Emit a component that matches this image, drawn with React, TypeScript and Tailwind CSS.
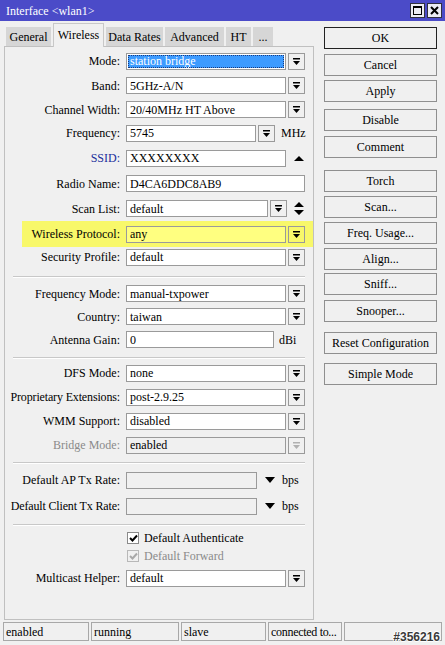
import React from 'react';

const font = "font-['Liberation_Serif',serif]";

function DropIcon({ disabled = false }: { disabled?: boolean }) {
  const c = disabled ? '#b0b0b0' : '#000';
  return (
    <svg width="9" height="9" viewBox="0 0 9 9">
      <rect x="1" y="1" width="7" height="1.5" fill={c} />
      <path d="M1 4 L8 4 L4.5 8 Z" fill={c} />
    </svg>
  );
}

function DropBtn({ disabled = false }: { disabled?: boolean }) {
  return (
    <div className="w-[17px] h-[17px] border border-[#9a9a9a] bg-[#f0f0f0] flex items-center justify-center shrink-0">
      <DropIcon disabled={disabled} />
    </div>
  );
}

function Field({
  value,
  w,
  cls = 'bg-white',
  textCls = 'text-black',
}: {
  value: string;
  w: string;
  cls?: string;
  textCls?: string;
}) {
  return (
    <div className={`${w} ${cls} h-[17px] border border-[#9a9a9a] flex items-center px-[3px] shrink-0`}>
      <span className={`${textCls} leading-none`}>{value}</span>
    </div>
  );
}

function Row({
  label,
  h,
  children,
  labelCls = 'text-black',
  rowCls = '',
  labelW = 'w-[116px]',
}: {
  label: string;
  h: string;
  children?: React.ReactNode;
  labelCls?: string;
  rowCls?: string;
  labelW?: string;
}) {
  return (
    <div className={`flex items-center ${h} ${rowCls}`}>
      <div className={`${labelW} text-right pr-[1px] shrink-0 whitespace-nowrap ${labelCls}`}>{label}</div>
      <div className="flex items-center ml-[5px] gap-[2px]">{children}</div>
    </div>
  );
}

function Sep({ cls }: { cls: string }) {
  return <div className={`mx-[8px] border-t border-[#c8c8c8] border-b-white border-b h-[2px] ${cls}`} />;
}

function Btn({ label, cls = '', ok = false }: { label: string; cls?: string; ok?: boolean }) {
  return (
    <div
      className={`w-[113px] h-[22px] flex items-center justify-center bg-[#f0f0f0] border ${
        ok ? 'border-[#222]' : 'border-[#8f8f8f]'
      } ${cls}`}
    >
      {label}
    </div>
  );
}

function Tab({ label, active = false, w }: { label: string; active?: boolean; w: string }) {
  return active ? (
    <div className={`${w} h-[24px] bg-[#f0f0f0] border-t border-l border-r border-[#c8c8c8] flex items-start justify-center pt-[2px] -mb-[1px] relative z-10`}>
      {label}
    </div>
  ) : (
    <div className={`${w} h-[19px] bg-[#d6d6d6] flex items-center justify-center`}>{label}</div>
  );
}

export default function App() {
  return (
    <div className={`w-[445px] h-[645px] bg-[#f0f0f0] text-[12px] text-black flex flex-col overflow-hidden ${font}`}>
      {/* title bar */}
      <div className="h-[21px] bg-[#4b4bc8] flex items-center justify-between pl-[6px] pr-[3px] shrink-0">
        <span className="text-white">Interface &lt;wlan1&gt;</span>
        <div className="flex gap-[2px]">
          <div className="w-[15px] h-[15px] bg-[#ececf4] border border-[#303040] flex items-center justify-center">
            <div className="w-[9px] h-[9px] border border-black border-t-2" />
          </div>
          <div className="w-[15px] h-[15px] bg-[#ececf4] border border-[#303040] flex items-center justify-center">
            <svg width="9" height="9" viewBox="0 0 9 9">
              <path d="M1 1 L8 8 M8 1 L1 8" stroke="#000" strokeWidth="2" />
            </svg>
          </div>
        </div>
      </div>

      <div className="flex flex-1 min-h-0">
        {/* left side */}
        <div className="w-[310px] ml-[4px] flex flex-col">
          <div className="h-[25px] flex items-end gap-[2px] pl-[2px]">
            <Tab label="General" w="w-[45px]" />
            <Tab label="Wireless" active w="w-[51px]" />
            <Tab label="Data Rates" w="w-[57px]" />
            <Tab label="Advanced" w="w-[59px]" />
            <Tab label="HT" w="w-[25px]" />
            <Tab label="..." w="w-[20px]" />
          </div>
          <div className="h-[574px] border border-[#c0c0c0] bg-[#f0f0f0] flex flex-col pt-[2px]">
            <Row label="Mode:" h="h-[24px]">
              <div className="w-[160px] h-[17px] border border-[#9a9a9a] bg-white p-[1px] shrink-0">
                <div className="h-full bg-[#3d9bff] flex items-center px-[2px] outline-1 outline-dotted outline-[#1b3b7c] -outline-offset-1">
                  <span className="text-white leading-none">station bridge</span>
                </div>
              </div>
              <DropBtn />
            </Row>
            <Row label="Band:" h="h-[25px]">
              <Field value="5GHz-A/N" w="w-[160px]" />
              <DropBtn />
            </Row>
            <Row label="Channel Width:" h="h-[23px]">
              <Field value="20/40MHz HT Above" w="w-[160px]" />
              <DropBtn />
            </Row>
            <Row label="Frequency:" h="h-[24px]">
              <Field value="5745" w="w-[130px]" />
              <DropBtn />
              <span className="ml-[4px]">MHz</span>
            </Row>
            <Row label="SSID:" h="h-[26px]" labelCls="text-[#1c2f9c]">
              <Field value="XXXXXXXX" w="w-[160px]" />
              <svg width="12" height="9" viewBox="0 0 12 9" className="ml-[5px]">
                <path d="M1 7 L11 7 L6 2 Z" fill="#000" />
              </svg>
            </Row>
            <Row label="Radio Name:" h="h-[25px]">
              <Field value="D4CA6DDC8AB9" w="w-[179px]" />
            </Row>
            <Row label="Scan List:" h="h-[25px]">
              <Field value="default" w="w-[142px]" />
              <DropBtn />
              <svg width="12" height="15" viewBox="0 0 12 15" className="ml-[4px]">
                <path d="M1 6 L11 6 L6 1 Z M1 9 L11 9 L6 14 Z" fill="#000" />
              </svg>
            </Row>
            <Row
              label="Wireless Protocol:"
              h="h-[26px]"
              rowCls="bg-[#f8f86a] ml-[17px]"
              labelW="w-[99px]"
            >
              <Field value="any" w="w-[160px]" cls="bg-[#ffff80]" />
              <div className="w-[17px] h-[17px] border border-[#9a9a9a] bg-[#f8f86a] flex items-center justify-center shrink-0">
                <DropIcon />
              </div>
            </Row>
            <Row label="Security Profile:" h="h-[20px]">
              <Field value="default" w="w-[160px]" />
              <DropBtn />
            </Row>
            <Sep cls="mt-[9px] mb-[4px]" />
            <Row label="Frequency Mode:" h="h-[23px]">
              <Field value="manual-txpower" w="w-[160px]" />
              <DropBtn />
            </Row>
            <Row label="Country:" h="h-[23px]">
              <Field value="taiwan" w="w-[160px]" />
              <DropBtn />
            </Row>
            <Row label="Antenna Gain:" h="h-[23px]">
              <Field value="0" w="w-[148px]" />
              <span className="ml-[3px]">dBi</span>
            </Row>
            <Sep cls="mt-[6px] mb-[2px]" />
            <Row label="DFS Mode:" h="h-[24px]">
              <Field value="none" w="w-[160px]" />
              <DropBtn />
            </Row>
            <Row label="Proprietary Extensions:" h="h-[24px]" labelCls="tracking-[-0.15px]">
              <Field value="post-2.9.25" w="w-[160px]" />
              <DropBtn />
            </Row>
            <Row label="WMM Support:" h="h-[24px]">
              <Field value="disabled" w="w-[160px]" />
              <DropBtn />
            </Row>
            <Row label="Bridge Mode:" h="h-[24px]" labelCls="text-[#8a8a8a]">
              <Field value="enabled" w="w-[160px]" cls="bg-[#f0f0f0]" />
              <DropBtn disabled />
            </Row>
            <Sep cls="mt-[5px] mb-[3px]" />
            <Row label="Default AP Tx Rate:" h="h-[26px]">
              <Field value="" w="w-[131px]" cls="bg-[#f0f0f0]" />
              <svg width="10" height="8" viewBox="0 0 10 8" className="ml-[6px]">
                <path d="M0 1 L10 1 L5 7 Z" fill="#000" />
              </svg>
              <span className="ml-[5px]">bps</span>
            </Row>
            <Row label="Default Client Tx Rate:" h="h-[26px]" labelCls="tracking-[-0.15px]">
              <Field value="" w="w-[131px]" cls="bg-[#f0f0f0]" />
              <svg width="10" height="8" viewBox="0 0 10 8" className="ml-[6px]">
                <path d="M0 1 L10 1 L5 7 Z" fill="#000" />
              </svg>
              <span className="ml-[5px]">bps</span>
            </Row>
            <Sep cls="mt-[5px] mb-[3px]" />
            <div className="h-[18px] flex items-center pl-[122px] gap-[5px]">
              <div className="w-[12px] h-[12px] border border-[#8a8a8a] bg-white flex items-center justify-center">
                <svg width="9" height="8" viewBox="0 0 9 8">
                  <path d="M1 4 L3.5 6.5 L8 1.5" stroke="#000" strokeWidth="2" fill="none" />
                </svg>
              </div>
              <span>Default Authenticate</span>
            </div>
            <div className="h-[18px] flex items-center pl-[122px] gap-[5px]">
              <div className="w-[12px] h-[12px] border border-[#b8b8b8] bg-[#f0f0f0] flex items-center justify-center">
                <svg width="9" height="8" viewBox="0 0 9 8">
                  <path d="M1 4 L3.5 6.5 L8 1.5" stroke="#a8a8a8" strokeWidth="2" fill="none" />
                </svg>
              </div>
              <span className="text-[#8a8a8a]">Default Forward</span>
            </div>
            <Row label="Multicast Helper:" h="h-[24px]" rowCls="mt-[1px]">
              <Field value="default" w="w-[160px]" />
              <DropBtn />
            </Row>
          </div>
        </div>

        {/* right buttons */}
        <div className="flex flex-col ml-[10px] pt-[6px]">
          <Btn label="OK" ok />
          <Btn label="Cancel" cls="mt-[5px]" />
          <Btn label="Apply" cls="mt-[4px]" />
          <Btn label="Disable" cls="mt-[7px]" />
          <Btn label="Comment" cls="mt-[5px]" />
          <Btn label="Torch" cls="mt-[12px]" />
          <Btn label="Scan..." cls="mt-[4px]" />
          <Btn label="Freq. Usage..." cls="mt-[4px]" />
          <Btn label="Align..." cls="mt-[4px]" />
          <Btn label="Sniff..." cls="mt-[3px]" />
          <Btn label="Snooper..." cls="mt-[5px]" />
          <Btn label="Reset Configuration" cls="mt-[10px]" />
          <Btn label="Simple Mode" cls="mt-[9px]" />
        </div>
      </div>

      {/* status bar */}
      <div className="h-[24px] flex items-start gap-[2px] pl-[3px] pt-[1px] shrink-0">
        <div className="w-[86px] h-[19px] border border-[#a8a8a8] flex items-center px-[2px]">enabled</div>
        <div className="w-[88px] h-[19px] border border-[#a8a8a8] flex items-center px-[2px]">running</div>
        <div className="w-[85px] h-[19px] border border-[#a8a8a8] flex items-center px-[2px]">slave</div>
        <div className="w-[74px] h-[19px] border border-[#a8a8a8] flex items-center px-[2px] whitespace-nowrap overflow-hidden">
          <span className="tracking-[-0.3px]">connected to...</span>
        </div>
        <div className="w-[98px] h-[19px] border border-[#a8a8a8] flex items-end justify-end">
          <span className="font-['Liberation_Sans',sans-serif] font-bold text-[12px] text-[#3a3a3a] leading-none mb-[-3px] mr-[1px] [text-shadow:1px_0_0_#fff,-1px_0_0_#fff,0_1px_0_#fff,0_-1px_0_#fff]">
            #356216
          </span>
        </div>
      </div>
    </div>
  );
}
